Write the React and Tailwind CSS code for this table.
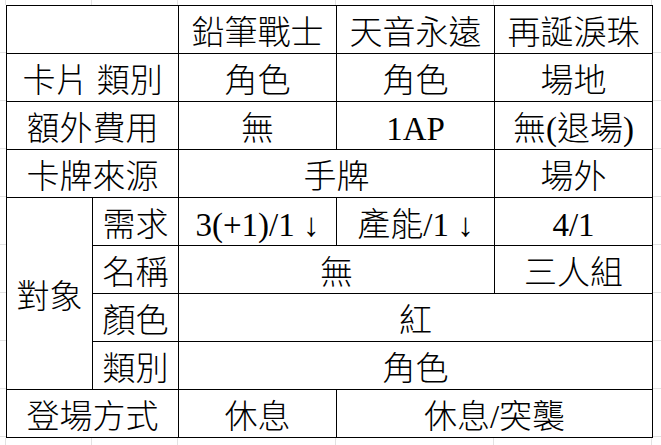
import React from 'react';

// Spreadsheet-style comparison table of three cards
const cell =
  "border border-black text-center align-middle pt-2 leading-none whitespace-nowrap font-normal font-['Liberation_Serif','Times_New_Roman','Noto_Sans_CJK_TC',serif]";

// CJK runs use the light face so they read closer to a thin Ming typeface
const C = ({ children }) => <span className="font-light">{children}</span>;

const GridTicks = ({ vertical }) => {
  // faint spreadsheet gridlines around the bordered table
  if (vertical) {
    return (
      <div className="flex flex-col">
        {[...Array(9)].map((_, i) => (
          <div key={i} className="h-[48px] border-b border-[#e2e2e2]" />
        ))}
      </div>
    );
  }
  return (
    <div className="flex">
      <div className="w-[6px] border-r border-[#e2e2e2]" />
      <div className="w-[86px] border-r border-[#e2e2e2]" />
      <div className="w-[86px] border-r border-[#e2e2e2]" />
      <div className="w-[158px] border-r border-[#e2e2e2]" />
      <div className="w-[158px] border-r border-[#e2e2e2]" />
      <div className="w-[158px] border-r border-[#e2e2e2]" />
    </div>
  );
};

export default function App() {
  return (
    <div className="w-[661px] h-[445px] bg-white overflow-hidden flex flex-col text-black">
      <div className="h-[5px] flex">
        <GridTicks />
      </div>

      <div className="flex">
        <div className="w-[6px] shrink-0">
          <GridTicks vertical />
        </div>

        <table className="border-collapse table-fixed w-[647px] text-[33px] text-black">
          <colgroup>
            <col className="w-[86px]" />
            <col className="w-[86px]" />
            <col className="w-[158px]" />
            <col className="w-[158px]" />
            <col className="w-[158px]" />
          </colgroup>
          <tbody>
            <tr className="h-[48px]">
              <td className={cell} colSpan={2}></td>
              <td className={cell}><C>鉛筆戰士</C></td>
              <td className={cell}><C>天音永遠</C></td>
              <td className={cell}><C>再誕淚珠</C></td>
            </tr>
            <tr className="h-[48px]">
              <td className={cell} colSpan={2}><C>卡片</C> <C>類別</C></td>
              <td className={cell}><C>角色</C></td>
              <td className={cell}><C>角色</C></td>
              <td className={cell}><C>場地</C></td>
            </tr>
            <tr className="h-[48px]">
              <td className={cell} colSpan={2}><C>額外費用</C></td>
              <td className={cell}><C>無</C></td>
              <td className={cell}>1AP</td>
              <td className={cell}><C>無</C>(<C>退場</C>)</td>
            </tr>
            <tr className="h-[48px]">
              <td className={cell} colSpan={2}><C>卡牌來源</C></td>
              <td className={cell} colSpan={2}><C>手牌</C></td>
              <td className={cell}><C>場外</C></td>
            </tr>
            <tr className="h-[48px]">
              <td className={cell} rowSpan={4}><C>對象</C></td>
              <td className={cell}><C>需求</C></td>
              <td className={cell}>3(+1)/1 ↓</td>
              <td className={cell}><C>產能</C>/1 ↓</td>
              <td className={cell}>4/1</td>
            </tr>
            <tr className="h-[48px]">
              <td className={cell}><C>名稱</C></td>
              <td className={cell} colSpan={2}><C>無</C></td>
              <td className={cell}><C>三人組</C></td>
            </tr>
            <tr className="h-[48px]">
              <td className={cell}><C>顏色</C></td>
              <td className={cell} colSpan={3}><C>紅</C></td>
            </tr>
            <tr className="h-[48px]">
              <td className={cell}><C>類別</C></td>
              <td className={cell} colSpan={3}><C>角色</C></td>
            </tr>
            <tr className="h-[48px]">
              <td className={cell} colSpan={2}><C>登場方式</C></td>
              <td className={cell}><C>休息</C></td>
              <td className={cell} colSpan={2}><C>休息</C>/<C>突襲</C></td>
            </tr>
          </tbody>
        </table>

        <div className="flex-1">
          <GridTicks vertical />
        </div>
      </div>

      <div className="flex-1 flex">
        <GridTicks />
      </div>
    </div>
  );
}
